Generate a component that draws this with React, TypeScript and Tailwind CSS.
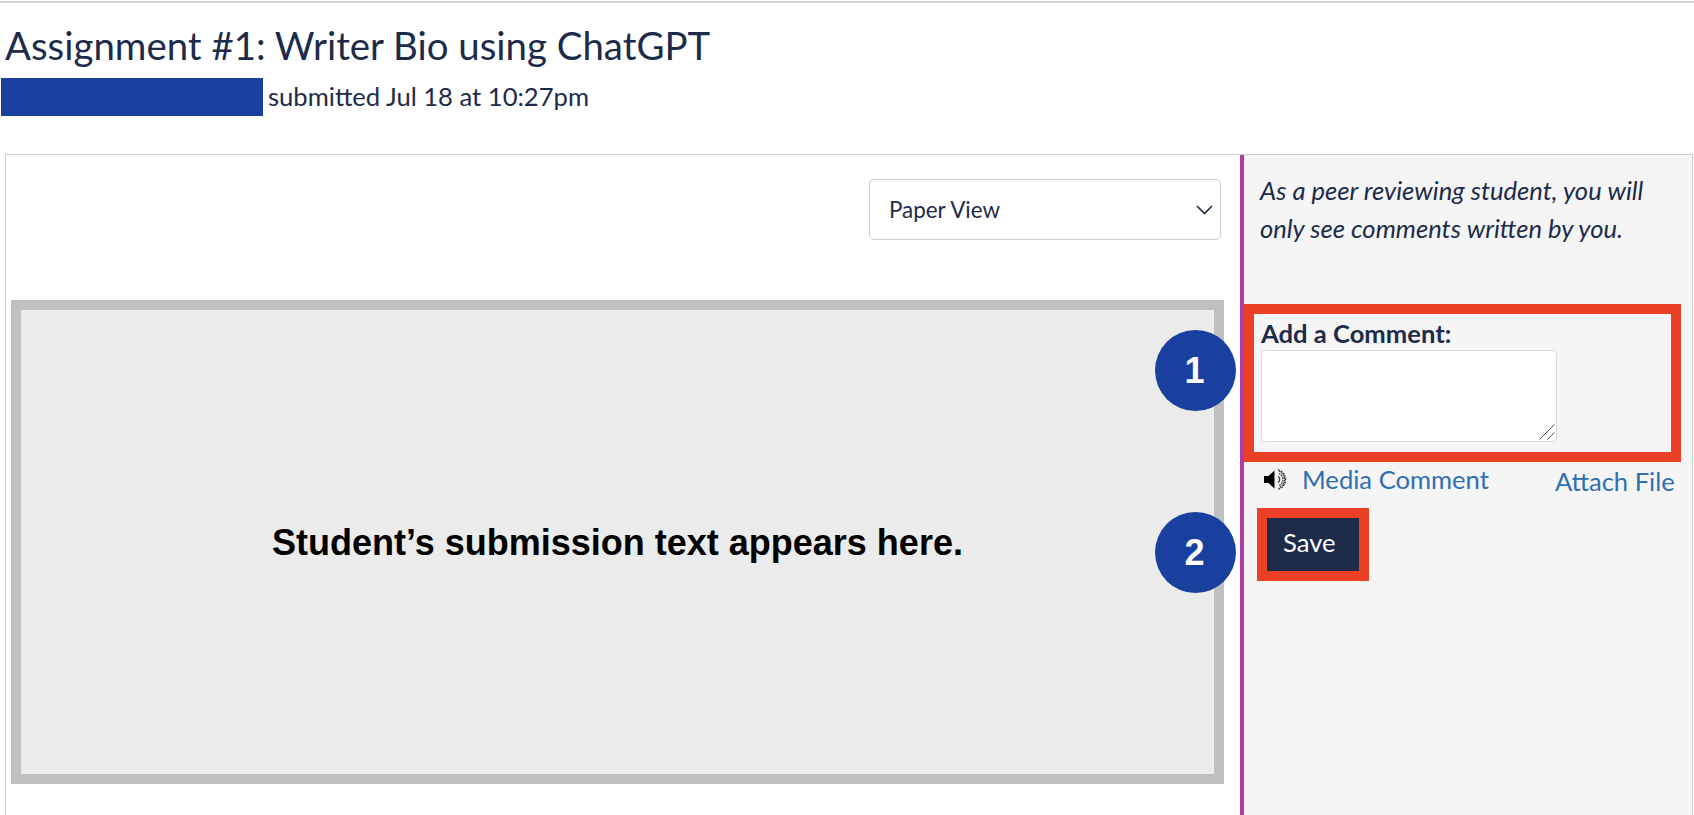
import React from "react";

function Speaker() {
  return (
    <svg width="24" height="21" viewBox="0 0 24 21" className="shrink-0">
      <path d="M0 7h4.500L10.500 1.500v18L4.500 14H0z" fill="#000" />
      <g fill="none" stroke="#333" strokeWidth="1.200">
        <path d="M14 7.500a3.500 3.500 0 0 1 0 6" />
        <path d="M15 4.500a6.500 6.500 0 0 1 0 12" strokeDasharray="1.800 0.800" />
        <path d="M15 2.300a8.800 8.800 0 0 1 0 16.400" strokeDasharray="1.800 0.800" />
        <path d="M14 0.800a10 10 0 0 1 0 19.400" strokeDasharray="2 1" />
      </g>
    </svg>
  );
}

function Badge({ n, className }: { n: string; className: string }) {
  return (
    <div
      className={`absolute left-[1155px] w-[81px] h-[81px] rounded-full bg-[#1a409f] text-white flex items-center justify-center font-bold text-[36px] pr-[2px] ${className}`}
      style={{ fontFamily: '"Liberation Sans", Arial, sans-serif' }}
    >
      {n}
    </div>
  );
}

export default function App() {
  return (
    <div
      className="relative w-[1694px] h-[815px] overflow-hidden bg-white text-[#1d2b4b]"
      style={{ fontFamily: 'Lato, "Noto Sans", sans-serif' }}
    >
      <div className="h-[2px] mt-px bg-[#d4d4d4]" />
      <h1 className="pl-[5px] pt-[18px] pb-px text-[38.4px] leading-[48px] font-normal">
        Assignment #1: Writer Bio using ChatGPT
      </h1>
      <div className="flex items-center h-[38px] mt-[8px] pl-px">
        <div className="w-[262px] h-[38px] bg-[#1a409f]" />
        <span className="ml-[5px] -mt-[2px] text-[25.6px] leading-[38px]">submitted Jul 18 at 10:27pm</span>
      </div>

      <div className="flex h-[661px] mt-[38px] ml-[5px] mr-px border-t border-l border-r border-[#c7cdd1]">
        <div className="w-[1234px] pl-[5px] pr-[16px] pt-[24px] shrink-0">
          <div className="ml-[858px] w-[352px] h-[61px] border border-[#c7cdd1] rounded-[5px] flex items-center justify-between pl-[19px] pr-[7px] text-[22.4px]">
            <span>Paper View</span>
            <svg width="17" height="10" viewBox="0 0 17 10" fill="none" stroke="#1d2b4b" strokeWidth="1.600">
              <path d="M1 1l7.500 7.500L16 1" />
            </svg>
          </div>
          <div className="mt-[60px] w-[1213px] h-[484px] border-[10px] border-[#c0c0c0] bg-[#ebebeb] flex items-center justify-center">
            <span
              className="font-bold text-[36px] text-black pt-[2px]"
              style={{ fontFamily: '"Liberation Sans", Arial, sans-serif' }}
            >
              Student’s submission text appears here.
            </span>
          </div>
        </div>

        <div className="flex-1 border-l-4 border-[#b03da5] bg-[#f5f5f5]">
          <p className="pl-[16px] pt-[16px] h-[149px] text-[25.6px] leading-[38px] italic">
            As a peer reviewing student, you will
            <br />
            only see comments written by you.
          </p>
          <div className="w-[437px] h-[158px] border-[10px] border-[#eb3f26] pl-[7px] pt-[2px]">
            <label className="block font-bold text-[25.6px] leading-[34px] h-[34px]">Add a Comment:</label>
            <div className="relative w-[296px] h-[92px]">
              <textarea className="block w-full h-full resize-none bg-white border border-[#d5dce3] rounded-[4px]" />
              <svg width="16" height="16" viewBox="0 0 16 16" stroke="#555" strokeWidth="1" className="absolute right-[2px] bottom-[2px] pointer-events-none">
                <path d="M0.500 15.500L15.500 0.500M8.500 15.500L15.500 8.500" />
              </svg>
            </div>
          </div>
          <div className="flex items-start pl-[20px] pt-[7px] h-[46px]">
            <Speaker />
            <a className="ml-[14px] -mt-[5px] text-[25.6px] leading-[30px] text-[#2f6fb0]">Media Comment</a>
            <a className="ml-[66px] -mt-[3px] text-[25.6px] leading-[30px] text-[#2f6fb0]">Attach File</a>
          </div>
          <div className="ml-[13px] w-[112px] h-[73px] border-[10px] border-[#eb3f26] bg-[#1e2c4a] text-white text-[25.6px] leading-[48px] pb-[5px] pl-[16px] flex items-center">
            Save
          </div>
        </div>
      </div>

      <Badge n="1" className="top-[330px]" />
      <Badge n="2" className="top-[512px]" />
    </div>
  );
}
